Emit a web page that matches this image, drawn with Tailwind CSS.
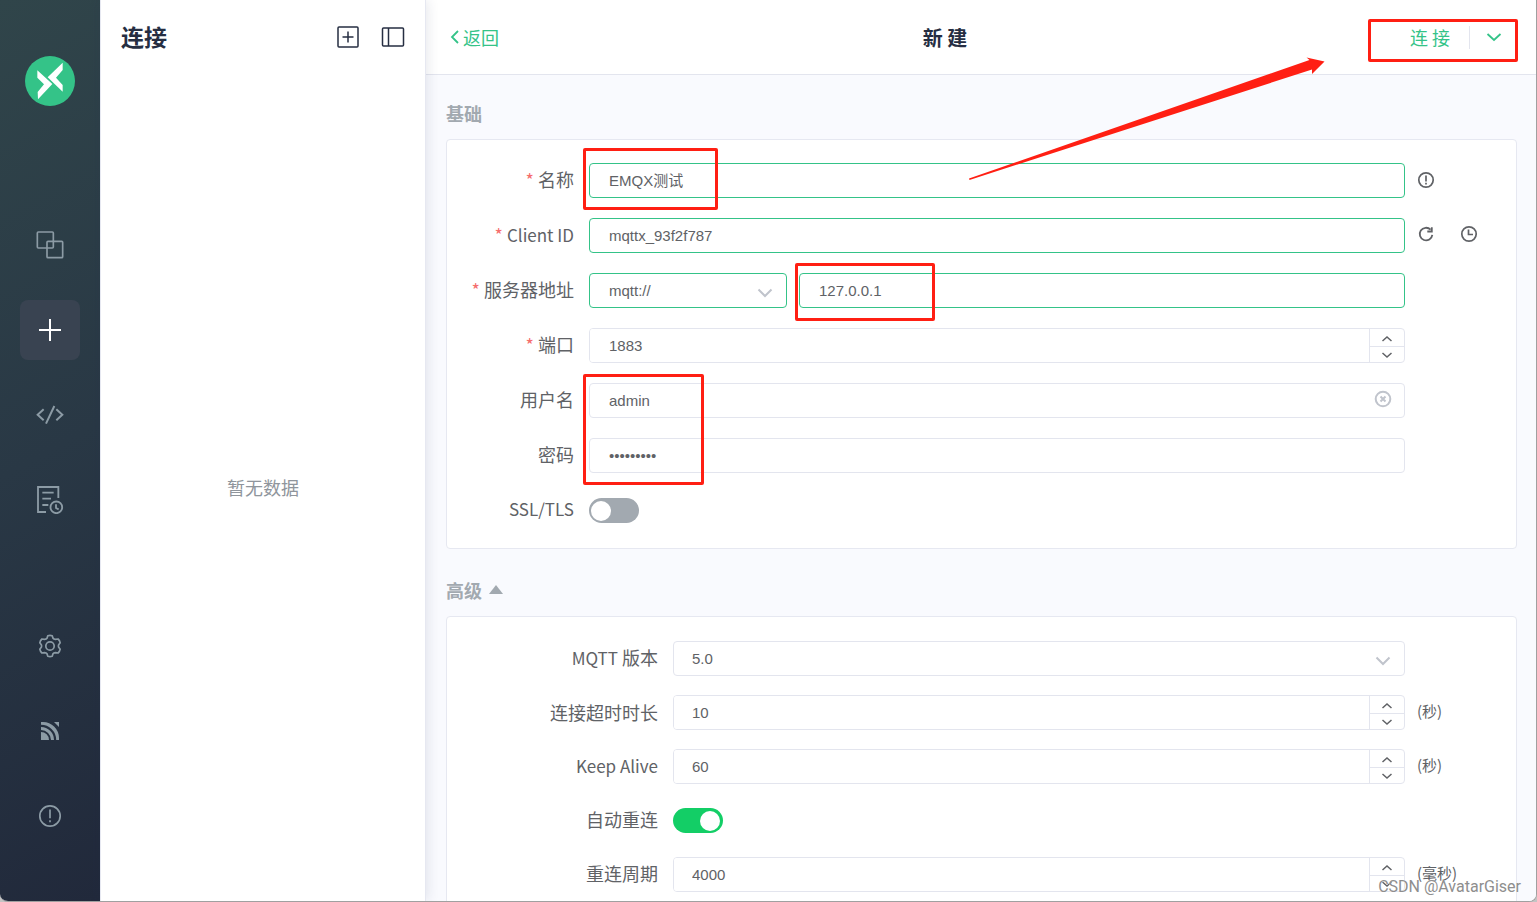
<!DOCTYPE html>
<html lang="zh-CN">
<head>
<meta charset="utf-8">
<meta name="viewport" content="width=device-width, initial-scale=1">
<title>MQTTX - 新建</title>
<script src="https://cdn.jsdelivr.net/npm/@tailwindcss/browser@4"></script>
</head>
<body class="bg-[#c4c4c4] font-['Noto_Sans_CJK_SC',sans-serif] text-[#606266]">
<div class="relative flex h-screen overflow-hidden rounded-b-lg border-r border-b border-[#a0a0a0] bg-white">

  <!-- Navigation rail -->
  <nav aria-label="主导航" class="flex w-[100px] shrink-0 flex-col items-center bg-[linear-gradient(151deg,#30454a_0%,#293845_50%,#21293b_100%)] pt-[56px] pb-[55px] text-[#8c9ba5]">
    <a href="#" aria-label="MQTTX" class="block">
      <svg class="size-[50px]" viewBox="75 78 150 150"><circle cx="150" cy="153" r="75" fill="#34c388"/><path fill="#fff" d="M112 121L157 162L114 208L113 186L132 163L112 143ZM188 98V120L168 143L188 165V185L143 142Z"/></svg>
    </a>
    <div class="mt-[109px] flex flex-col gap-[25px]">
      <button type="button" aria-label="连接列表" class="grid size-[60px] place-items-center rounded-lg">
        <svg class="size-7" viewBox="108 603 84 84" fill="none" stroke="currentColor" stroke-width="5"><rect x="112" y="606" width="48" height="48" rx="3"/><rect x="141" y="634" width="47" height="49" rx="3"/></svg>
      </button>
      <button type="button" aria-label="新建连接" class="grid size-[60px] place-items-center rounded-lg bg-[#394351] text-white">
        <svg class="size-7" viewBox="0 0 28 28" fill="none" stroke="currentColor" stroke-width="2"><path d="M14 3V25M3 14H25"/></svg>
      </button>
      <button type="button" aria-label="脚本" class="grid size-[60px] place-items-center rounded-lg">
        <svg class="size-7" viewBox="108 63 84 84" fill="none" stroke="currentColor" stroke-width="6"><path d="M131 88L113 104.500L131 121M163 78L138 131M169 88L187 104.500L169 121"/></svg>
      </button>
      <button type="button" aria-label="日志" class="grid size-[60px] place-items-center rounded-lg">
        <svg class="size-7" viewBox="108 318 84 84" fill="none" stroke="currentColor" stroke-width="5.500"><path d="M138 396H114V321H175V354M127 338H161M127 356H153M127 375H145"/><circle cx="169" cy="382" r="17.500"/><path d="M168 373V384L176 388"/></svg>
      </button>
    </div>
    <div class="mt-auto flex flex-col gap-[25px]">
      <button type="button" aria-label="设置" class="grid size-[60px] place-items-center rounded-lg">
        <svg class="size-7" viewBox="0 0 28 28" fill="none" stroke="currentColor" stroke-width="1.700" stroke-linejoin="round"><circle cx="14" cy="14" r="4.200"/><path d="M11.800 3.700Q14 2.900 16.200 3.700L17 6.200Q17.600 7.200 19.500 7.300L22.100 7Q23.800 8.500 24.200 10.800L22.700 12.700Q22.100 14 22.700 15.300L24.200 17.200Q23.800 19.500 22.100 21L19.500 20.700Q17.600 20.800 17 21.800L16.200 24.300Q14 25.100 11.800 24.300L11 21.800Q10.400 20.800 8.500 20.700L5.900 21Q4.200 19.500 3.800 17.200L5.300 15.300Q5.900 14 5.300 12.700L3.800 10.800Q4.200 8.500 5.900 7L8.500 7.300Q10.400 7.200 11 6.200Z"/></svg>
      </button>
      <button type="button" aria-label="EMQX Cloud" class="grid size-[60px] place-items-center rounded-lg">
        <svg class="size-[18px]" viewBox="0 0 18 18"><path fill="currentColor" d="M0 10A8 8 0 0 1 8 18H0ZM0 5A13 13 0 0 1 13 18H10A10 10 0 0 0 0 8ZM0 0H2A16 16 0 0 1 18 16V18H15.200A15.200 15.200 0 0 0 0 2.800ZM13 0H18V5Z"/></svg>
      </button>
      <button type="button" aria-label="关于" class="grid size-[60px] place-items-center rounded-lg">
        <svg class="size-7" viewBox="0 0 28 28" fill="none" stroke="currentColor" stroke-width="1.700"><circle cx="14" cy="14" r="10.200"/><path d="M14 7.500V16.300M14 18.300V20.300"/></svg>
      </button>
    </div>
  </nav>

  <!-- Connection list -->
  <aside class="relative z-10 flex w-[326px] shrink-0 flex-col border-r border-l border-[#e6e8f1] bg-white shadow-[1px_0_12px_rgba(30,45,80,0.12)]">
    <div class="flex h-[74px] items-center px-5 text-[#262e42]">
      <h1 class="pb-[3px] text-[23px] leading-8 font-bold">连接</h1>
      <button type="button" aria-label="新建" class="ml-auto">
        <svg class="size-6" viewBox="0 0 24 24" fill="none" stroke="currentColor" stroke-width="1.500"><rect x="2" y="2" width="20" height="20" rx="1"/><path d="M12 6.500V17.500M6.500 12H17.500"/></svg>
      </button>
      <button type="button" aria-label="隐藏连接列表" class="ml-[21px]">
        <svg class="size-6" viewBox="0 0 24 24" fill="none" stroke="currentColor" stroke-width="1.500"><rect x="1.500" y="3" width="21" height="18" rx="1"/><path d="M7.500 3V21"/></svg>
      </button>
    </div>
    <p class="grid flex-1 place-items-center text-[18px] text-[#8f959c]">暂无数据</p>
  </aside>

  <main class="flex min-w-0 flex-1 flex-col bg-[#f9fafe]">
    <header class="flex h-[75px] shrink-0 items-center justify-between border-b border-[#e3e5ee] bg-white pr-[18px] pl-6 text-[#34c388]">
      <a href="#" class="flex items-center gap-1 text-[18px] leading-6">
        <svg class="h-4 w-[9px]" viewBox="0 0 9 16" fill="none" stroke="currentColor" stroke-width="1.800"><path d="M8 2L2 8L8 14"/></svg>返回
      </a>
      <h2 class="pt-0.5 text-[20px] leading-8 font-bold text-[#262e42]">新 建</h2>
      <div class="relative flex items-center">
        <button type="button" class="px-[19px] text-[18px] leading-6">连 接</button>
        <span class="h-[23px] w-px bg-[#e3e5ee]"></span>
        <button type="button" aria-label="更多连接选项" class="px-4">
          <svg class="h-4 w-4" viewBox="0 0 16 16" fill="none" stroke="currentColor" stroke-width="1.800"><path d="M1.500 5L8 11L14.500 5"/></svg>
        </button>
        <span class="pointer-events-none absolute -top-[6px] right-0 h-[43px] w-[150px] rounded-xs border-3 border-[#ff1f13]"></span>
      </div>
    </header>

    <form class="min-h-0 flex-1 overflow-hidden pt-[26px] pr-[19px] pl-5">
      <h3 class="mb-[14px] text-[18px] leading-6 font-bold text-[#a2a9b0]">基础</h3>
      <section class="flex flex-col gap-5 rounded border border-[#e6e8f1] bg-white pt-[23px] pb-5 text-[18px]">
        <div class="flex h-[35px] items-center">
          <label for="name" class="w-[142px] shrink-0 pr-[15px] pb-[3px] text-right"><span class="text-[#f56c6c]">*</span> 名称</label>
          <div class="relative flex-1">
            <input id="name" value="EMQX测试" class="block h-[35px] w-full rounded border border-[#34c388] bg-white px-[19px] pb-0.5 font-['Liberation_Sans','Noto_Sans_CJK_SC',sans-serif] text-[15px]">
            <span class="pointer-events-none absolute -top-[15px] -left-[6px] h-[62px] w-[135px] rounded-xs border-3 border-[#ff1f13]"></span>
          </div>
          <div class="flex w-[111px] shrink-0 pb-0.5 pl-3">
            <button type="button" aria-label="名称说明"><svg class="size-[18px]" viewBox="0 0 18 18" fill="none" stroke="currentColor" stroke-width="1.700"><circle cx="9" cy="9" r="7.200"/><path d="M9 4.500V10.500M9 11.800V13.500"/></svg></button>
          </div>
        </div>
        <div class="flex h-[35px] items-center">
          <label for="client" class="w-[142px] shrink-0 pr-[15px] pb-[3px] text-right"><span class="text-[#f56c6c]">*</span> <span class="text-[17px]">Client ID</span></label>
          <input id="client" value="mqttx_93f2f787" class="h-[35px] min-w-0 flex-1 rounded border border-[#34c388] bg-white px-[19px] font-['Liberation_Sans',sans-serif] text-[15px]">
          <div class="flex w-[111px] shrink-0 gap-[25px] pb-[3px] pl-3">
            <button type="button" aria-label="重新生成"><svg class="size-[18px]" viewBox="0 0 18 18" fill="none" stroke="currentColor" stroke-width="1.800"><path d="M13.600 4.700A6.300 6.300 0 1 0 15.300 9.800"/><path d="M14.800 2.200V6.500H10.300"/></svg></button>
            <button type="button" aria-label="时间戳"><svg class="size-[18px]" viewBox="0 0 18 18" fill="none" stroke="currentColor" stroke-width="1.700"><circle cx="9" cy="9" r="7.200"/><path d="M8.500 4.500V9.500H13"/></svg></button>
          </div>
        </div>
        <div class="flex h-[35px] items-center">
          <label for="host" class="w-[142px] shrink-0 pr-[15px] pb-[3px] text-right"><span class="text-[#f56c6c]">*</span> 服务器地址</label>
          <div class="relative w-[198px] shrink-0">
            <select aria-label="协议" class="block h-[35px] w-full appearance-none rounded border border-[#34c388] bg-white px-[19px] pt-0.5 font-['Liberation_Sans',sans-serif] text-[15px]"><option>mqtt://</option><option>ws://</option></select>
            <svg class="pointer-events-none absolute top-3 right-[14px] size-4" viewBox="0 0 16 16" fill="none" stroke="#c0c4cc" stroke-width="2"><path d="M1.500 4.500L8 11L14.500 4.500"/></svg>
          </div>
          <div class="relative ml-3 flex-1">
            <input id="host" value="127.0.0.1" class="block h-[35px] w-full rounded border border-[#34c388] bg-white px-[19px] font-['Liberation_Sans',sans-serif] text-[15px]">
            <span class="pointer-events-none absolute -top-[10px] -left-1 h-[58px] w-[140px] rounded-xs border-3 border-[#ff1f13]"></span>
          </div>
          <div class="w-[111px] shrink-0"></div>
        </div>
        <div class="flex h-[35px] items-center">
          <label for="port" class="w-[142px] shrink-0 pr-[15px] pb-[3px] text-right"><span class="text-[#f56c6c]">*</span> 端口</label>
          <div class="flex h-[35px] min-w-0 flex-1 overflow-hidden rounded border border-[#e3e5ee]">
            <input id="port" inputmode="numeric" value="1883" class="min-w-0 flex-1 bg-white px-[19px] pt-0.5 font-['Liberation_Sans',sans-serif] text-[15px]">
            <div class="flex w-[35px] flex-col border-l border-[#e3e5ee]">
              <button type="button" aria-label="增加" class="grid h-[18px] place-items-center border-b border-[#e3e5ee] pt-0.5"><svg class="h-2 w-3" viewBox="0 0 12 8" fill="none" stroke="currentColor" stroke-width="1.500"><path d="M1.500 6L6 2L10.500 6"/></svg></button>
              <button type="button" aria-label="减少" class="grid flex-1 place-items-center"><svg class="h-2 w-3" viewBox="0 0 12 8" fill="none" stroke="currentColor" stroke-width="1.500"><path d="M1.500 2L6 6L10.500 2"/></svg></button>
            </div>
          </div>
          <div class="w-[111px] shrink-0"></div>
        </div>
        <div class="flex h-[35px] items-center">
          <label for="user" class="w-[142px] shrink-0 pr-[15px] pb-[3px] text-right">用户名</label>
          <div class="relative flex-1">
            <input id="user" value="admin" class="block h-[35px] w-full rounded border border-[#e3e5ee] bg-white px-[19px] font-['Liberation_Sans',sans-serif] text-[15px]">
            <button type="button" aria-label="清除" class="absolute top-[7px] right-[13px] text-[#c0c4cc]"><svg class="size-[18px]" viewBox="0 0 18 18" fill="none" stroke="currentColor" stroke-width="2"><circle cx="9" cy="9" r="7.300"/><path d="M6.500 6.500L11.500 11.500M11.500 6.500L6.500 11.500"/></svg></button>
            <span class="pointer-events-none absolute -top-[9px] -left-[6px] z-10 h-[111px] w-[121px] rounded-xs border-3 border-[#ff1f13]"></span>
          </div>
          <div class="w-[111px] shrink-0"></div>
        </div>
        <div class="flex h-[35px] items-center">
          <label for="pass" class="w-[142px] shrink-0 pr-[15px] pb-[3px] text-right">密码</label>
          <input id="pass" type="password" value="adminpass" class="h-[35px] min-w-0 flex-1 rounded border border-[#e3e5ee] bg-white px-[19px] font-['Liberation_Sans',sans-serif] text-[15px]">
          <div class="w-[111px] shrink-0"></div>
        </div>
        <div class="flex h-[35px] items-center">
          <label for="ssl" class="w-[142px] shrink-0 pr-[15px] pb-[3px] text-right text-[17px]">SSL/TLS</label>
          <input id="ssl" type="checkbox" role="switch" class="flex h-[25px] w-[50px] appearance-none items-center rounded-full bg-[#a2a9b0] px-0.5 before:size-[20px] before:rounded-full before:bg-white checked:justify-end checked:bg-[#13ce66]">
        </div>
      </section>

      <h3 class="mt-[29px] mb-[14px] text-[18px] leading-6 font-bold text-[#a2a9b0]">
        <button type="button" aria-expanded="true" class="flex items-center gap-[7px]">高级<svg class="h-[10px] w-[14px]" viewBox="0 0 14 10"><path fill="currentColor" d="M7 0L14 9H0Z"/></svg></button>
      </h3>
      <section class="flex flex-col gap-[19px] rounded border border-[#e6e8f1] bg-white pt-6 pb-5 text-[18px]">
        <div class="flex h-[35px] items-center">
          <label for="version" class="w-[226px] shrink-0 pr-[15px] pb-[3px] text-right"><span class="text-[17px]">MQTT</span> 版本</label>
          <div class="relative flex-1">
            <select id="version" class="block h-[35px] w-full appearance-none rounded border border-[#e3e5ee] bg-white px-[18px] pt-0.5 font-['Liberation_Sans',sans-serif] text-[15px]"><option>5.0</option><option>3.1.1</option></select>
            <svg class="pointer-events-none absolute top-3 right-[14px] size-4" viewBox="0 0 16 16" fill="none" stroke="#c0c4cc" stroke-width="2"><path d="M1.500 4.500L8 11L14.500 4.500"/></svg>
          </div>
          <div class="w-[111px] shrink-0"></div>
        </div>
        <div class="flex h-[35px] items-center">
          <label for="timeout" class="w-[226px] shrink-0 pr-[15px] pb-px text-right">连接超时时长</label>
          <div class="flex h-[35px] min-w-0 flex-1 overflow-hidden rounded border border-[#e3e5ee]">
            <input id="timeout" inputmode="numeric" value="10" class="min-w-0 flex-1 bg-white px-[18px] pt-0.5 font-['Liberation_Sans',sans-serif] text-[15px]">
            <div class="flex w-[35px] flex-col border-l border-[#e3e5ee]">
              <button type="button" aria-label="增加" class="grid h-[18px] place-items-center border-b border-[#e3e5ee] pt-0.5"><svg class="h-2 w-3" viewBox="0 0 12 8" fill="none" stroke="currentColor" stroke-width="1.500"><path d="M1.500 6L6 2L10.500 6"/></svg></button>
              <button type="button" aria-label="减少" class="grid flex-1 place-items-center"><svg class="h-2 w-3" viewBox="0 0 12 8" fill="none" stroke="currentColor" stroke-width="1.500"><path d="M1.500 2L6 6L10.500 2"/></svg></button>
            </div>
          </div>
          <span class="w-[111px] shrink-0 pb-0.5 pl-3 text-[15px]">(秒)</span>
        </div>
        <div class="flex h-[35px] items-center">
          <label for="keepalive" class="w-[226px] shrink-0 pr-[15px] pb-px text-right text-[17px]">Keep Alive</label>
          <div class="flex h-[35px] min-w-0 flex-1 overflow-hidden rounded border border-[#e3e5ee]">
            <input id="keepalive" inputmode="numeric" value="60" class="min-w-0 flex-1 bg-white px-[18px] pt-0.5 font-['Liberation_Sans',sans-serif] text-[15px]">
            <div class="flex w-[35px] flex-col border-l border-[#e3e5ee]">
              <button type="button" aria-label="增加" class="grid h-[18px] place-items-center border-b border-[#e3e5ee] pt-0.5"><svg class="h-2 w-3" viewBox="0 0 12 8" fill="none" stroke="currentColor" stroke-width="1.500"><path d="M1.500 6L6 2L10.500 6"/></svg></button>
              <button type="button" aria-label="减少" class="grid flex-1 place-items-center"><svg class="h-2 w-3" viewBox="0 0 12 8" fill="none" stroke="currentColor" stroke-width="1.500"><path d="M1.500 2L6 6L10.500 2"/></svg></button>
            </div>
          </div>
          <span class="w-[111px] shrink-0 pb-0.5 pl-3 text-[15px]">(秒)</span>
        </div>
        <div class="flex h-[35px] items-center">
          <label for="reconnect" class="w-[226px] shrink-0 pr-[15px] pb-[3px] text-right">自动重连</label>
          <input id="reconnect" type="checkbox" role="switch" checked class="flex h-[25px] w-[50px] appearance-none items-center rounded-full bg-[#a2a9b0] px-[3px] before:size-[20px] before:rounded-full before:bg-white checked:justify-end checked:bg-[#13ce66]">
        </div>
        <div class="flex h-[35px] items-center">
          <label for="period" class="w-[226px] shrink-0 pr-[15px] pb-[3px] text-right">重连周期</label>
          <div class="flex h-[35px] min-w-0 flex-1 overflow-hidden rounded border border-[#e3e5ee]">
            <input id="period" inputmode="numeric" value="4000" class="min-w-0 flex-1 bg-white px-[18px] pt-0.5 font-['Liberation_Sans',sans-serif] text-[15px]">
            <div class="flex w-[35px] flex-col border-l border-[#e3e5ee]">
              <button type="button" aria-label="增加" class="grid h-[18px] place-items-center border-b border-[#e3e5ee] pt-0.5"><svg class="h-2 w-3" viewBox="0 0 12 8" fill="none" stroke="currentColor" stroke-width="1.500"><path d="M1.500 6L6 2L10.500 6"/></svg></button>
              <button type="button" aria-label="减少" class="grid flex-1 place-items-center"><svg class="h-2 w-3" viewBox="0 0 12 8" fill="none" stroke="currentColor" stroke-width="1.500"><path d="M1.500 2L6 6L10.500 2"/></svg></button>
            </div>
          </div>
          <span class="w-[111px] shrink-0 pb-[3px] pl-3 text-[15px]">(毫秒)</span>
        </div>
      </section>
    </form>
  </main>

  <!-- Arrow pointing to the connect button -->
  <svg class="pointer-events-none absolute top-[56px] right-[211px] z-20 h-[126px] w-[358px]" viewBox="967 56 358 126"><path fill="#ff1f13" d="M969 178.500L1309.500 60L1306.500 57.500L1324.500 61.500L1312 74L1312 69.500L969.500 180Z"/></svg>
  <p class="pointer-events-none absolute right-[15px] bottom-0.5 z-20 font-['Roboto',sans-serif] text-[16px] leading-6 text-[#8e8e8e] [text-shadow:0_0_1px_#fff]">CSDN @AvatarGiser</p>
</div>
</body>
</html>
